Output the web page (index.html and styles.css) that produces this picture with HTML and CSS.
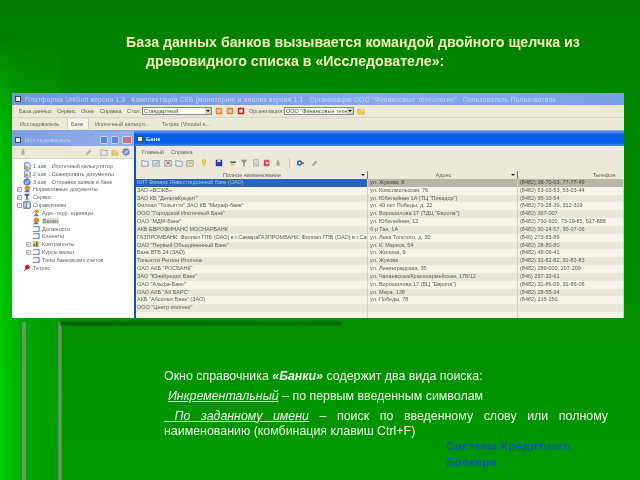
FILE: index.html
```html
<!DOCTYPE html>
<html lang="ru">
<head>
<meta charset="utf-8">
<title>База данных банков</title>
<link rel="stylesheet" href="styles.css">
</head>
<body>
<svg class="defs" aria-hidden="true">
  <symbol id="doc" viewBox="0 0 10 10"><path d="M2 1h5l2 2v6H2z" fill="#dfe8f8" stroke="#4a72c0"/><path d="M1 6l3-2 3 3-3 2z" fill="#e0a040"/></symbol>
  <symbol id="globe" viewBox="0 0 10 10"><circle cx="5" cy="5" r="4" fill="#7096dc" stroke="#3a56a0"/><path d="M2 8l6-5" stroke="#d8e4f8"/></symbol>
  <symbol id="gold" viewBox="0 0 10 10"><circle cx="5.500" cy="4" r="3.500" fill="#c89838"/><path d="M1 9l4-3 4 3z" fill="#5070b0"/></symbol>
  <symbol id="pin" viewBox="0 0 10 10"><path d="M2 1h6v2H6v5H4V3H2z" fill="#3060a0"/><path d="M2 8h6v1H2z" fill="#909090"/></symbol>
  <symbol id="gpin" viewBox="0 0 10 10"><path d="M4 1h2v2l1 1v4l-2 1-2-1V4l1-1z" fill="#a8a898"/></symbol>
  <symbol id="slash" viewBox="0 0 10 10"><path d="M2 8l5-6 2 2-5 5z" fill="#a8a898"/></symbol>
  <symbol id="funnel" viewBox="0 0 10 10"><path d="M1 1h8L6 5v4H4V5z" fill="#8c9488"/></symbol>
  <symbol id="flag" viewBox="0 0 10 10"><path d="M1 3h7l1 2H3z" fill="#206850"/><path d="M2 6h5v2H2z" fill="#e8c030"/></symbol>
  <symbol id="print" viewBox="0 0 10 10"><rect x="2" y="1" width="6" height="8" fill="#d8d8d0" stroke="#8c98a8" stroke-width=".7"/><path d="M3 6l4 2" stroke="#d0a050"/></symbol>
  <symbol id="film" viewBox="0 0 10 10"><rect x="1" y="1" width="7" height="8" fill="#c85060"/><path d="M4 3l4 2-4 2z" fill="#f0d8e0"/></symbol>
  <symbol id="book" viewBox="0 0 10 10"><rect x="1" y="1" width="8" height="8" fill="#dfe8f0" stroke="#30508c"/><path d="M4 1v8" stroke="#30508c"/></symbol>
  <symbol id="person" viewBox="0 0 10 10"><circle cx="6" cy="3" r="2.500" fill="#e09830"/><path d="M2 9l3-4 4 4z" fill="#5a78b8"/><path d="M1 5l3-3" stroke="#c04040"/></symbol>
  <symbol id="form" viewBox="0 0 10 10"><path d="M2 2h7v6H1" fill="none" stroke="#3058b0"/><path d="M1 2h2v2H1z" fill="#e8d060"/></symbol>
  <symbol id="chart" viewBox="0 0 10 10"><rect x="1" y="1" width="8" height="8" fill="#d8c878"/><path d="M2 8V5h2v3zM5 8V3h2v5z" fill="#407838"/></symbol>
  <symbol id="bug" viewBox="0 0 10 10"><circle cx="5.500" cy="4" r="3" fill="#d01828"/><path d="M1 9l4-4" stroke="#402020"/></symbol>
  <symbol id="tool" viewBox="0 0 10 10"><path d="M1 2h3l1 1h4v6H1z" fill="#eeecdc" stroke="#7f93b8"/></symbol>
  <symbol id="toolg" viewBox="0 0 10 10"><rect x="1" y="2" width="8" height="7" fill="#dfe4e8" stroke="#7f93b8"/><path d="M3 6l2 1 3-4" stroke="#50905c" fill="none"/></symbol>
  <symbol id="toolr" viewBox="0 0 10 10"><rect x="1" y="2" width="8" height="7" fill="#e4dcd8" stroke="#7f93b8"/><path d="M3 3l4 4M7 3l-4 4" stroke="#c03838"/></symbol>
  <symbol id="tooly" viewBox="0 0 10 10"><rect x="1" y="2" width="8" height="7" fill="#e8e4b8" stroke="#8c9a90"/><path d="M3 5h4" stroke="#a09030"/></symbol>
  <symbol id="key" viewBox="0 0 10 10"><circle cx="5" cy="3" r="2" fill="none" stroke="#d8b030" stroke-width="1.500"/><path d="M5 5v4" stroke="#d8b030" stroke-width="1.500"/></symbol>
  <symbol id="disk" viewBox="0 0 10 10"><rect x="1" y="1" width="8" height="8" fill="#2c3c9c"/><rect x="3" y="1" width="4" height="3" fill="#d0d8f0"/></symbol>
  <symbol id="gear" viewBox="0 0 10 10"><circle cx="4.500" cy="5" r="3.500" fill="#2c6ca0"/><circle cx="4.500" cy="5" r="1.500" fill="#e8e8d8"/><path d="M8 4h2v2H8z" fill="#2c6ca0"/></symbol>
  <symbol id="square" viewBox="0 0 10 10"><rect x="1" y="1" width="8" height="8" rx="1" fill="#e88828"/><rect x="3" y="3" width="4" height="4" fill="#f8d8a8"/></symbol>
  <symbol id="redsq" viewBox="0 0 10 10"><rect x="1" y="1" width="8" height="8" rx="1" fill="#c82820"/><rect x="3" y="3" width="4" height="4" fill="#f4e0d8"/></symbol>
  <symbol id="folder" viewBox="0 0 10 10"><path d="M1 3h3l1 1h4v5H1z" fill="#f0c850" stroke="#b89020" stroke-width=".5"/><circle cx="7" cy="3" r="2" fill="#f8e080"/></symbol>
</svg>

<div class="glow"></div>
<div class="rule rule-a"></div>
<div class="rule rule-b"></div>
<div class="rule-top"></div>

<h1 class="heading">База данных банков вызывается командой двойного щелчка из<br><span class="indent">древовидного списка в «Исследователе»:</span></h1>

<div class="shot">
  <div class="app-title">
    <i class="win-ico"></i>
    <span>Платформа UniSoft версия 1.3 &nbsp; Комплектация СКБ (мониторинг и анализ версия 1.1 &nbsp; Организация ООО "Финансовые технологии" &nbsp; Пользователь Пользователь</span>
  </div>
  <div class="app-menu">
    <span class="m1">База данных</span><span class="m2">Сервис</span><span class="m3">Окна</span><span class="m4">Справка</span><span class="m5">Стол:</span>
    <span class="combo combo-a">Стандартный<b></b></span>
    <svg class="ic14"><use href="#square"/></svg><svg class="ic14"><use href="#square"/></svg><svg class="ic14"><use href="#redsq"/></svg>
    <span class="m6">Организация:</span>
    <span class="combo combo-b">ООО "Финансовые техн<b></b></span>
    <svg class="ic14"><use href="#folder"/></svg>
  </div>
  <div class="app-tabs">
    <span class="t1">Исследователь</span><span class="t2">Банк</span><span class="t3">Ипотечный калькул...</span><span class="t4">Тетрис (Vinodel e...</span>
  </div>
  <div class="workspace">
    <aside class="side">
      <div class="side-title"><i class="win-ico"></i><span>Исследователь</span>
        <i class="wb wb-min"></i><i class="wb wb-max"></i><i class="wb wb-close"></i></div>
      <div class="side-tools">
        <svg class="ic8 s1"><use href="#gpin"/></svg>
        <svg class="ic8 s2"><use href="#slash"/></svg>
        <svg class="ic8"><use href="#tool"/></svg>
        <svg class="ic8"><use href="#folder"/></svg>
        <svg class="ic8"><use href="#globe"/></svg>
      </div>
      <ul class="tree">
        <li class="l1"><svg><use href="#doc"/></svg>1 шаг : Ипотечный калькулятор</li>
        <li class="l1"><svg><use href="#doc"/></svg>2 шаг : Сканировать документы</li>
        <li class="l1"><svg><use href="#globe"/></svg>3 шаг : Отправка заявок в банк</li>
        <li class="l0"><i class="box">+</i><svg><use href="#gold"/></svg>Нормативные документы</li>
        <li class="l0"><i class="box">+</i><svg><use href="#pin"/></svg>Сервис</li>
        <li class="l0"><i class="box">−</i><svg><use href="#book"/></svg>Справочники</li>
        <li class="l2"><svg><use href="#person"/></svg>Адм.-терр. единицы</li>
        <li class="l2"><svg><use href="#gold"/></svg><span class="pick">Банки</span></li>
        <li class="l2"><svg><use href="#form"/></svg>Должности</li>
        <li class="l2"><svg><use href="#form"/></svg>Клиенты</li>
        <li class="l2 boxed"><i class="box">+</i><svg><use href="#chart"/></svg>Контрагенты</li>
        <li class="l2 boxed"><i class="box">+</i><svg><use href="#form"/></svg>Курсы валют</li>
        <li class="l2"><svg><use href="#form"/></svg>Типы банковских счетов</li>
        <li class="l1"><svg><use href="#bug"/></svg>Тетрис</li>
      </ul>
    </aside>
    <section class="bank">
      <div class="bank-title"><i class="win-ico"></i><span>Банк</span></div>
      <div class="bank-body">
        <div class="bank-menu"><span>Главный</span><span>Справка</span></div>
        <div class="bank-tools">
          <svg><use href="#tool"/></svg><svg><use href="#toolg"/></svg><svg><use href="#toolr"/></svg><svg><use href="#tool"/></svg><svg><use href="#tooly"/></svg>
          <svg class="gap"><use href="#key"/></svg><svg class="gap"><use href="#disk"/></svg><svg class="gap"><use href="#flag"/></svg><svg><use href="#funnel"/></svg><svg><use href="#print"/></svg><svg><use href="#film"/></svg><svg><use href="#gpin"/></svg>
          <i class="sep"></i>
          <svg><use href="#gear"/></svg><svg class="gap"><use href="#slash"/></svg>
        </div>
        <div class="grid">
          <div class="row head"><span>Полное наименование<b></b></span><span>Адрес<b></b></span><span>Телефон</span></div>
          <div class="row sel"><span>КИТ Финанс Инвестиционный банк (ОАО)</span><span>ул. Жукова, 8</span><span>(8482) 36-70-03, 77-77-49</span></div>
          <div class="row"><span>ЗАО «БСЖВ»</span><span>ул. Комсомольская, 76</span><span>(8482) 53-03-53, 53-03-44</span></div>
          <div class="row"><span>ЗАО КБ "ДельтаКредит"</span><span>ул. Юбилейная 1А (ТЦ "Пикадор")</span><span>(8482) 95-10-54</span></div>
          <div class="row"><span>Филиал "Тольятти" ЗАО КБ "Мираф-банк"</span><span>ул. 40 лет Победы, д. 22</span><span>(8482) 73-28-39, 312-319</span></div>
          <div class="row"><span>ООО "Городской Ипотечный Банк"</span><span>ул. Ворошилова 17 (ТДЦ "Европа")</span><span>(8482) 367-007</span></div>
          <div class="row"><span>ОАО "МДМ-Банк"</span><span>ул. Юбилейная, 12</span><span>(8482) 730-600, 73-19-85, 517-888</span></div>
          <div class="row"><span>АКБ ЕВРОФИНАНС МОСНАРБАНК</span><span>б-р Гая, 1А</span><span>(8482) 30-24-57, 30-07-06</span></div>
          <div class="row"><span>ГАЗПРОМБАНК: Филиал ГПБ (ОАО) в г.СамараГАЗПРОМБАНК: Филиал ГПБ (ОАО) в г.Сама</span><span>ул. Льва Толстого, д. 30</span><span>(846) 273-83-89</span></div>
          <div class="row"><span>ОАО "Первый Объединенный Банк"</span><span>ул. К. Маркса, 54</span><span>(8482) 28-80-80</span></div>
          <div class="row"><span>Банк ВТБ 24 (ЗАО)</span><span>ул. Жилина, 9</span><span>(8482) 48-06-41</span></div>
          <div class="row"><span>Тольятти Регион Ипотека</span><span>ул. Жукова</span><span>(8482) 31-82-82, 31-83-83</span></div>
          <div class="row"><span>ОАО АКБ "РОСБАНК"</span><span>ул. Ленинградская, 35</span><span>(8482) 289-000, 207-209</span></div>
          <div class="row"><span>ЗАО "ЮниКредит Банк"</span><span>ул. Чапаевская/Красноармейская, 178/12</span><span>(846) 267-33-61</span></div>
          <div class="row"><span>ОАО "Альфа-Банк"</span><span>ул. Ворошилова 17 (БЦ "Европа")</span><span>(8482) 31-86-09, 31-86-06</span></div>
          <div class="row"><span>ОАО АКБ "АК БАРС"</span><span>ул. Мира, 138</span><span>(8482) 28-55-34</span></div>
          <div class="row"><span>АКБ "Абсолют Банк" (ЗАО)</span><span>ул. Победы, 78</span><span>(8482) 215-250</span></div>
          <div class="row"><span>ООО "Центр ипотеки"</span><span></span><span></span></div>
          <div class="row fill"><span></span><span></span><span></span></div>
        </div>
      </div>
    </section>
  </div>
</div>

<div class="notes">
  <p>Окно справочника <b><i>«Банки»</i></b> содержит два вида поиска:</p>
  <p class="second"><i class="ul">Инкрементальный</i> – по первым введенным символам</p>
  <p class="third"><i class="ul">&nbsp;По заданному имени</i> – поиск по введенному слову или полному наименованию (комбинация клавиш Ctrl+F)</p>
</div>

<div class="brand">Система Кредитного<br>Брокера</div>
</body>
</html>
```
FILE: styles.css
```css
* { box-sizing: border-box; }
html, body { margin: 0; padding: 0; }
body {
  width: 640px;
  height: 480px;
  overflow: hidden;
  position: relative;
  font-family: "Liberation Sans", Arial, sans-serif;
  background: linear-gradient(180deg, #007c00 0, #008600 90px, #008f00 320px, #009800 480px);
}
.defs { position: absolute; width: 0; height: 0; }

.glow {
  position: absolute; left: 0; top: 0; width: 62px; height: 480px;
  background: linear-gradient(90deg, #00d000 0, #00a800 22px, #009c00 58px, rgba(0,144,0,0) 62px);
  -webkit-mask-image: linear-gradient(180deg, transparent 40px, rgba(0,0,0,.7) 130px, #000 400px);
  mask-image: linear-gradient(180deg, transparent 40px, rgba(0,0,0,.7) 130px, #000 400px);
}
.rule { position: absolute; top: 322px; bottom: 0; filter: blur(.7px); }
.rule-a { left: 22px; width: 4px; background: #5f9d5f; }
.rule-b { left: 58px; width: 4px; background: linear-gradient(90deg, #3e9a3e, #6f9f6f 60%, #2a8c2a); }
.rule-top {
  position: absolute; left: 60px; top: 322px; width: 282px; height: 3px;
  background: linear-gradient(90deg, #004c00, #006a00 85%, #005800);
  filter: blur(.8px);
}

.heading {
  position: relative;
  margin: 0;
  padding: 33px 0 0 126px;
  height: 93px;
  font-size: 14.2px;
  line-height: 19px;
  font-weight: 700;
  color: #f2f5b8;
  white-space: nowrap;
  filter: blur(.3px);
}
.indent { margin-left: 20px; }

.shot {
  position: relative;
  margin-left: 12px;
  width: 611.5px;
  height: 225px;
  overflow: hidden;
  background: #ece9d8;
  font-size: 5.5px;
  color: #62665f;
  filter: blur(.55px);
}
.win-ico { display: block; width: 6px; height: 6px; background: #ddeedd; border: 1px solid #405040; flex: none; }

.app-title {
  display: flex; align-items: center; gap: 4px;
  height: 12px; padding-left: 3px;
  background: linear-gradient(90deg, #7096dc, #86a8ec 60%, #7ba0e4);
  color: #c4d6f8; white-space: nowrap;
  font-size: 6.6px; letter-spacing: .23px;
}
.app-menu {
  display: flex; align-items: center;
  height: 13px; padding-left: 7px;
  border-bottom: 1px solid #d8d5c2;
  white-space: nowrap;
}
.m1 { width: 38px; } .m2 { width: 24px; } .m3 { width: 19px; } .m4 { width: 27px; } .m5 { width: 15px; }
.combo {
  position: relative; display: block;
  height: 8px; line-height: 6.500px; padding-left: 1px;
  width: 70px; background: #fbfbf6; border: 1px solid #8c8c80; overflow: hidden;
  color: #4a4e4a;
}
.combo b { position: absolute; right: 0; top: 0; width: 6px; height: 6px; background: #d4d0c0; }
.combo b::after, .row b::after {
  content: ""; position: absolute; left: 1px; top: 2px;
  border: 2px solid transparent; border-top: 2.5px solid #222; border-bottom: 0;
}
.ic14 { width: 8px; height: 8px; margin-left: 3px; flex: none; }
.m6 { margin: 0 2px 0 4px; width: 33px; }
.app-tabs {
  display: flex; align-items: center;
  height: 13px; padding-left: 8px;
  white-space: nowrap;
  border-bottom: 1px solid #7ea6e8;
}
.t1 { width: 47px; }
.t2 { width: 22px; height: 10px; line-height: 10px; padding-left: 3px; background: #f7f6ec; border: 0 solid #cfccb8; border-width: 0 1px; margin-right: 6px; }
.t3 { width: 67px; }

.workspace { display: flex; height: 187px; }
.side { width: 122px; flex: none; background: #fff; }
.side-title {
  display: flex; align-items: center; gap: 4px;
  height: 15px; padding: 2px 2px 0 3px;
  background: linear-gradient(90deg, #7c9ee0, #92b0ea);
  color: #c4d4f4; font-size: 6px; letter-spacing: .25px; white-space: nowrap;
}
.side-title span { flex: 1; }
.wb { display: block; width: 8px; height: 8px; border-radius: 1px; background: #5c84dc; border: 1px solid #c0d0f0; margin-left: -1px; flex: none; }
.wb-close { width: 10px; background: #d4707a; }
.side-tools {
  display: flex; align-items: center; gap: 3px;
  height: 13px; padding-left: 7px;
  background: #ece9d8;
  border-bottom: 1px solid #d8d5c2;
}
.ic8 { width: 8px; height: 8px; flex: none; opacity: .85; }
.s1 { margin-right: 54px; }
.s2 { margin-right: 5px; }

.tree { list-style: none; margin: 0; padding: 3px 0 0; color: #62676e; }
.tree li {
  display: flex; align-items: center;
  height: 7.83px; white-space: nowrap;
}
.tree svg { width: 8px; height: 8px; flex: none; margin-right: 2px; }
.l0 { padding-left: 4.500px; }
.l1 { padding-left: 11px; }
.l2 { padding-left: 20px; }
.l2.boxed { padding-left: 13.500px; }
.box {
  display: block; width: 5px; height: 5px; margin-right: 1.500px; flex: none;
  border: 1px solid #b0b0a8; background: #fff; color: #777;
  font: normal 5px/3px "Liberation Sans", sans-serif; text-align: center; overflow: hidden;
}
.pick { background: #dcdcd4; padding: 0 1px; }

.bank { flex: 1; min-width: 0; display: flex; flex-direction: column; }
.bank-title {
  display: flex; align-items: center; gap: 3px;
  height: 15px; padding-left: 3px;
  background: linear-gradient(180deg, #5a96f0, #0a5de8 25%, #0a5de8 80%, #4a8af0);
  color: #e8f0ff; font-weight: 700; font-size: 6px;
}
.bank-body { flex: 1; min-height: 0; display: flex; flex-direction: column; border-left: 2.5px solid #1a4ec0; background: #f5f3e6; }
.bank-menu { display: flex; gap: 7px; align-items: center; height: 12px; padding-left: 6px; background: #ece9d8; }
.bank-tools {
  display: flex; align-items: center; gap: 3.300px;
  height: 13px; padding: 0 0 3px 5px; background: #ece9d8;
}
.bank-tools svg { width: 8px; height: 8px; flex: none; }
.bank-tools .gap { margin-left: 3px; }
.sep { display: block; width: 1px; height: 10px; background: #c8c4b0; margin: 0 3px; }

.grid { flex: 1; min-height: 0; overflow: hidden; }
.row {
  display: grid; grid-template-columns: 232px 150px 1fr;
  height: 7.83px; line-height: 7.83px;
  white-space: nowrap; color: #595e59;
}
.row:nth-child(even) { background: #e9e7d9; }
.row:nth-child(odd) { background: #f6f4e8; }
.row > span { position: relative; overflow: hidden; padding-left: 1px; border-right: 1px solid #d6d3c2; }
.row > span:nth-child(2), .row > span:nth-child(3) { padding-left: 2px; }
.row.head { height: 8px; line-height: 8px; background: #ece9d8; color: #60645c; }
.head span { text-align: center; border-right: 1px solid #77776a; }
.head span:last-child { text-align: right; padding-right: 8px; border-right: 0; }
.head b { position: absolute; right: 1px; top: 1px; width: 6px; height: 6px; }
.row.sel { background: #b8b6a8; color: #444844; }
.row.sel span:first-child { background: #2c62c4; color: #a8c0ee; }
.row.fill { height: 20px; background: #f6f4e8; }

.notes {
  position: absolute;
  left: 164px; top: 369px; width: 444px;
  font-size: 12.4px;
  line-height: 15px;
  color: #eef6e6;
  filter: blur(.25px);
}
.notes p { margin: 0; }
.notes .second { margin: 4.500px 0 0 4px; }
.notes .third { margin-top: 5px; text-align: justify; }
.ul { text-decoration: underline; }

.brand {
  position: absolute;
  left: 446px; top: 438px;
  font-size: 11.600px; line-height: 16px;
  letter-spacing: .35px;
  font-weight: 700;
  color: #0b5aa6;
  filter: blur(.45px);
  white-space: nowrap;
}
```
